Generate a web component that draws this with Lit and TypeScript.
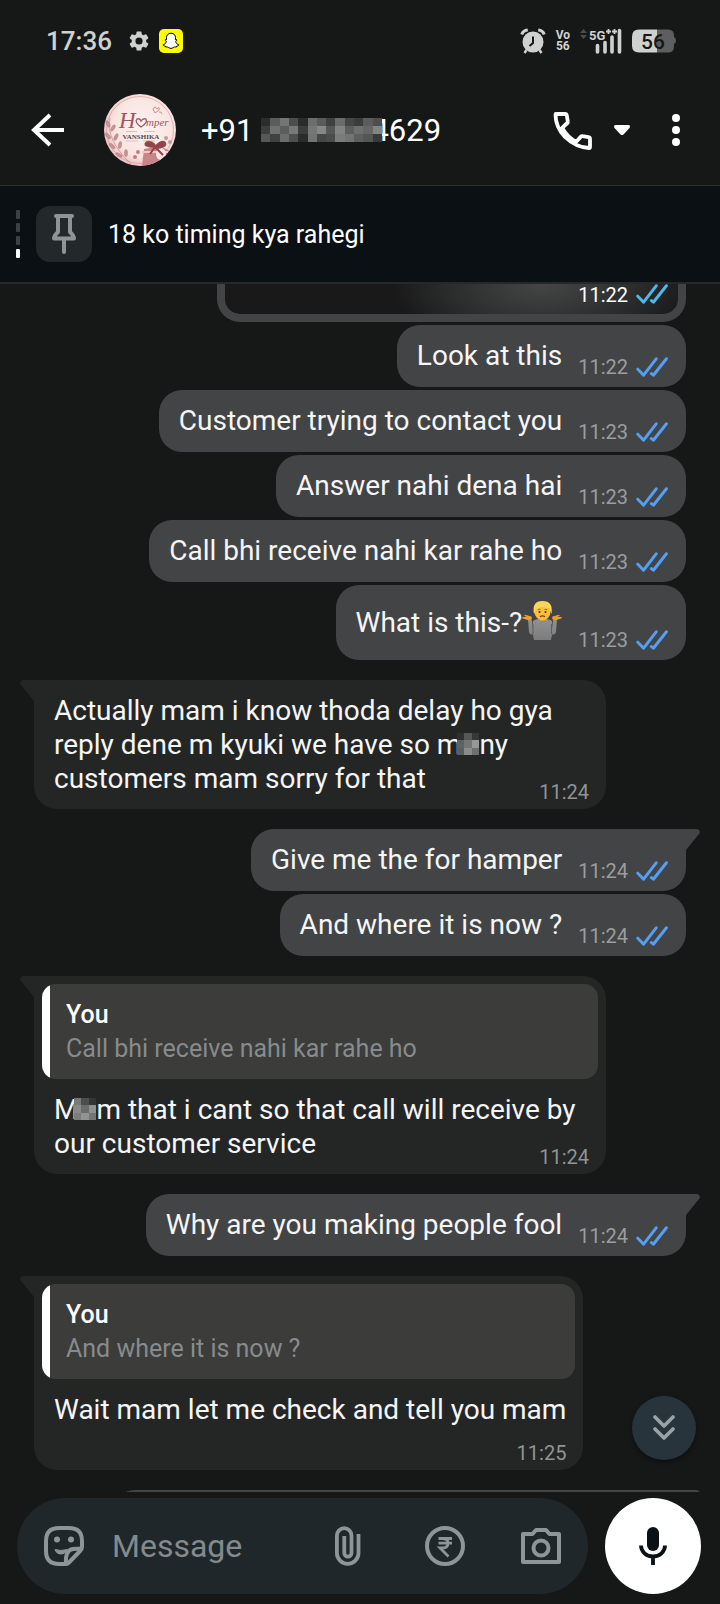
import { LitElement, html, css, svg, nothing } from "lit";
import { customElement, property } from "lit/decorators.js";
import { classMap } from "lit/directives/class-map.js";

type Part = string | { mosaic: string[] } | { emoji: true };

interface Message {
  parts: Part[];
  time: string;
  mine: boolean;
  tail?: boolean;
  stacked?: boolean;
  quote?: string;
}

const MESSAGES: Message[] = [
  { parts: ["Look at this"], time: "11:22", mine: true },
  { parts: ["Customer trying to contact you"], time: "11:23", mine: true },
  { parts: ["Answer nahi dena hai"], time: "11:23", mine: true },
  { parts: ["Call bhi receive nahi kar rahe ho"], time: "11:23", mine: true },
  { parts: ["What is this-?", { emoji: true }], time: "11:23", mine: true },
  {
    parts: [
      "Actually mam i know thoda delay ho gya reply dene m kyuki we have so m",
      { mosaic: ["#2f3030", "#555656", "#363737", "#606161", "#747575", "#969797", "#5b5c5c", "#8a8b8b", "#6d6e6e"] },
      "ny customers mam sorry for that",
    ],
    time: "11:24",
    mine: false,
    tail: true,
  },
  { parts: ["Give me the for hamper"], time: "11:24", mine: true, tail: true },
  { parts: ["And where it is now ?"], time: "11:24", mine: true },
  {
    parts: [
      "M",
      { mosaic: ["#787979", "#4c4d4d", "#333434", "#888989", "#6b6c6c", "#8f9090", "#7b7c7c", "#919292", "#747575"] },
      "m that i cant so that call will receive by our customer service",
    ],
    time: "11:24",
    mine: false,
    tail: true,
    quote: "Call bhi receive nahi kar rahe ho",
  },
  { parts: ["Why are you making people fool"], time: "11:24", mine: true, tail: true },
  {
    parts: ["Wait mam let me check and tell you mam"],
    time: "11:25",
    mine: false,
    tail: true,
    stacked: true,
    quote: "And where it is now ?",
  },
];

const ticks = html`<svg class="ticks" width="32" height="20" viewBox="0 0 32 20" role="img" aria-label="Read">
  <g fill="none" stroke="currentColor" stroke-width="3" stroke-linecap="round" stroke-linejoin="round">
    <path d="M1.8 12.2 7.6 18.2 20.2 1.8" />
    <path d="M15.4 16.6 17.4 18.2 30.4 1.8" />
  </g>
</svg>`;

const shrug = html`<svg class="emoji" width="40" height="39" viewBox="0 0 40 39" role="img" aria-label="Person shrugging">
  <defs>
    <linearGradient id="shirt" x1="0" x2="0" y1="0" y2="1">
      <stop offset="0" stop-color="#929292" /><stop offset="1" stop-color="#7c7c7c" />
    </linearGradient>
  </defs>
  <path d="M11 20q3-2.500 9.500-2.500T30 20l.5 8 .5-9 4-1-1 13q-.5 3-4 2.500l-1 5.500H12l-1-5.500q-3.500.5-4-2.500L6 18l4 1 .5 9z" fill="url(#shirt)" />
  <path d="M11 33V23M29.500 33V23" stroke="#5e5e5e" stroke-width="1" />
  <path d="M5.500 19 .8 17.500q-1.200-1 .2-1.500l3.500-.2L2 14.200q.5-1 2-.2l5.500 1.500.5 2.500q-2 1.500-4.500 1zM34.500 19l4.700-1.500q1.200-1-.2-1.500l-3.500-.2 2.500-1.600q-.5-1-2-.2l-5.500 1.500-.5 2.500q2 1.500 4.500 1z" fill="#e9a02c" />
  <path d="M17 16h7v3q-3.500 2-7 0z" fill="#d98c1f" />
  <ellipse cx="20.500" cy="10.500" rx="8" ry="9" fill="#fbbf3a" />
  <path d="M12 13Q9.500 0 20.500 0T29.500 13q-1.500-3-2-6-5 .5-7-1.500Q16 7 14 8q-.5 3-2 5z" fill="#fcd65c" />
  <path d="M16 8.800q1.200-.9 2.400-.3M22.600 8.500q1.200-.6 2.400.3" stroke="#8a5a12" stroke-width=".9" fill="none" />
  <circle cx="17.500" cy="11" r="1.100" fill="#513a16" /><circle cx="23.500" cy="11" r="1.100" fill="#513a16" />
  <path d="M18 15.800q2.500-2 5 0" stroke="#7a3f10" stroke-width="1.200" fill="none" />
</svg>`;

const mosaic = (cells: string[]) => html`<svg class="mosaic" width="22" height="22" viewBox="0 0 3 3" preserveAspectRatio="none" shape-rendering="crispEdges" role="img" aria-label="Redacted">
  ${cells.map((c, i) => svg`<rect x=${i % 3} y=${Math.floor(i / 3)} width="1" height="1" fill=${c} />`)}
</svg>`;

@customElement("chat-message")
export class ChatMessage extends LitElement {
  @property({ attribute: false }) message!: Message;

  static styles = css`
    :host {
      display: flex;
      max-width: min(88%, 572px);
      align-self: flex-start;
    }
    :host([mine]) {
      align-self: flex-end;
    }
    .bubble {
      position: relative;
      box-sizing: border-box;
      border-radius: 23px;
      background: #242626;
      color: #f4f5f5;
      font-size: 28px;
      line-height: 34px;
    }
    .mine {
      background: #434446;
    }
    .tail {
      border-top-left-radius: 0;
    }
    .mine.tail {
      border-top-left-radius: 23px;
      border-top-right-radius: 0;
    }
    .point {
      position: absolute;
      top: 0;
      right: 100%;
      color: #242626;
    }
    .mine .point {
      right: auto;
      left: 100%;
      color: #434446;
      transform: scaleX(-1);
    }
    .quote {
      margin: 8px 8px 0;
      padding: 14px 24px 13px;
      border-radius: 14px;
      background: linear-gradient(to right, #fff 8px, #3c3c3a 8px);
      color: #868b8d;
      font-size: 25px;
    }
    .who {
      display: block;
      color: #fff;
      font-weight: 500;
    }
    .said {
      display: block;
    }
    .body {
      display: grid;
      padding: 14px 17px 6px 20px;
    }
    .mine .body {
      grid-template-columns: auto auto;
      column-gap: 16px;
      padding: 14px 18px 9px 20px;
    }
    .text {
      grid-area: 1 / 1;
      padding-bottom: 7px;
    }
    .mine .text {
      padding-bottom: 5px;
    }
    .meta {
      grid-area: 1 / 1;
      place-self: end;
      display: flex;
      align-items: center;
      gap: 8px;
      color: #919394;
      font-size: 20px;
      line-height: 22px;
    }
    .mine .meta {
      grid-area: 1 / 2;
      color: #9c9d9e;
    }
    .stacked .meta {
      grid-area: 2 / 1;
      padding-top: 8px;
    }
    .ticks {
      color: #559ff2;
    }
    .emoji {
      margin: 2px 0 6px;
      vertical-align: -14px;
    }
    .mosaic {
      position: relative;
      margin-left: -4px;
      vertical-align: -1px;
    }
  `;

  render() {
    const m = this.message;
    return html`<article class=${classMap({ bubble: true, mine: m.mine, tail: !!m.tail, stacked: !!m.stacked })}>
      ${m.tail
        ? html`<svg class="point" width="14" height="21" viewBox="0 0 14 21" aria-hidden="true">
            <path d="M14 0H3Q-1 1 .6 4.500L14 21z" fill="currentColor" />
          </svg>`
        : nothing}
      ${m.quote ? html`<div class="quote"><span class="who">You</span><span class="said">${m.quote}</span></div>` : nothing}
      <div class="body">
        <div class="text">${m.parts.map((p) => (typeof p === "string" ? p : "emoji" in p ? shrug : mosaic(p.mosaic)))}</div>
        <div class="meta"><time>${m.time}</time>${m.mine ? ticks : nothing}</div>
      </div>
    </article>`;
  }
}

@customElement("status-bar")
export class StatusBar extends LitElement {
  static styles = css`
    :host {
      display: flex;
      align-items: center;
      height: 82px;
      padding: 0 44px 0 46px;
      color: #cfd1d0;
      font-size: 26px;
      font-weight: 500;
    }
    .left,
    .right {
      display: flex;
      align-items: center;
    }
    .left {
      flex: 1;
      gap: 10px;
    }
    .clock {
      margin-right: 7px;
    }
    .right {
      gap: 10px;
    }
    .volte {
      display: grid;
      font-size: 12px;
      font-weight: 700;
      line-height: 11px;
      text-align: center;
    }
    svg {
      display: block;
    }
  `;

  render() {
    return html`
      <div class="left">
        <time class="clock">17:36</time>
        <svg width="20" height="20" viewBox="2 2 20 20" aria-hidden="true">
          <path fill="currentColor" d="M19.140 12.940c.04-.3.060-.61.060-.94 0-.32-.02-.64-.07-.94l2.030-1.580a.49.49 0 0 0 .12-.61l-1.920-3.320a.49.49 0 0 0-.59-.22l-2.390.96a7 7 0 0 0-1.620-.94l-.36-2.540a.48.48 0 0 0-.48-.41h-3.840a.48.48 0 0 0-.47.41l-.36 2.540c-.59.24-1.130.57-1.620.94l-2.390-.96a.48.48 0 0 0-.59.22L2.740 8.870a.48.48 0 0 0 .12.61l2.030 1.580c-.05.3-.09.63-.09.94s.02.64.07.94l-2.030 1.580a.49.49 0 0 0-.12.61l1.920 3.320c.12.22.37.29.59.22l2.390-.96c.5.38 1.030.7 1.620.94l.36 2.540c.05.24.24.41.48.41h3.840c.24 0 .44-.17.47-.41l.36-2.540a7 7 0 0 0 1.620-.94l2.390.96c.22.08.47 0 .59-.22l1.920-3.320a.48.48 0 0 0-.12-.61zM12 15.600a3.600 3.600 0 1 1 0-7.200 3.600 3.600 0 0 1 0 7.200z" />
        </svg>
        <svg width="24" height="24" viewBox="0 0 24 24" aria-hidden="true">
          <rect width="24" height="24" rx="5" fill="#fffc00" />
          <path d="M12 4.200c3 0 4.500 2.100 4.500 4.500v2q1.400-.5 1.500.3c0 .7-1.200.9-1.300 1.600.4 1.800 1.700 2.800 3.100 3.200.2.900-1 1.100-2.100 1.300l-.4 1c-1.300-.3-2.200-.2-3.200.6-1.300.9-2.900.9-4.200 0-1-.8-1.900-.9-3.200-.6l-.4-1c-1.100-.2-2.300-.4-2.100-1.300 1.400-.4 2.700-1.400 3.100-3.200C7.200 11.900 6 11.700 6 11q.1-.8 1.500-.3v-2c0-2.400 1.500-4.500 4.500-4.500z" fill="#fff" stroke="#000" stroke-width="1" />
        </svg>
      </div>
      <div class="right">
        <svg width="26" height="26" viewBox="0 0 26 26" aria-hidden="true">
          <circle cx="13" cy="14" r="10.500" fill="currentColor" />
          <path d="M1.800 6.500Q3 2.500 7.800 2M24.200 6.500Q23 2.500 18.200 2" stroke="currentColor" stroke-width="3" fill="none" />
          <path d="M6.500 22 4.500 25M19.500 22l2 3" stroke="currentColor" stroke-width="2.500" />
          <path d="M13 8.500V15l-3.500 3" stroke="#161817" stroke-width="2" fill="none" />
        </svg>
        <div class="volte"><span>Vo</span><span>56</span></div>
        <svg width="42" height="26" viewBox="0 0 42 26" role="img" aria-label="Signal">
          <path d="M0 5 3.500 1 7 5zM0 7h7l-3.500 4z" fill="#4b4d4c" />
          <text x="9" y="11.500" font-size="13" font-weight="700" fill="currentColor">5G</text>
          <path d="M26 3.500h5M28.500 1v5M32 3.500h5M34.500 1v5" stroke="currentColor" stroke-width="1.800" />
          <path d="M17.500 17.500v6.500M25 14.500V24M32 9V24M39.500 2.500V24" stroke="currentColor" stroke-width="3.600" stroke-linecap="round" />
        </svg>
        <svg width="44" height="24" viewBox="0 0 44 24" role="img" aria-label="Battery">
          <path d="M25 .5h11q6 0 6 6V8q2 .5 2 3.500T42 15v2.500q0 6-6 6H25z" fill="#5d5f5e" />
          <path d="M25 .5H7q-7 0-7 7v9q0 7 7 7h18z" fill="currentColor" />
          <text x="21" y="19.500" text-anchor="middle" font-size="21" font-weight="500" fill="#161817">56</text>
        </svg>
      </div>
    `;
  }
}

const REDACTED_DIGITS = [
  "#2b2d2c", "#5a5c5b", "#747675", "#4c4e4d", "#2a2c2b", "#6c6e6d", "#595b5a", "#3f4140", "#6a6c6b", "#454746", "#3b3d3c", "#5b5d5c", "#4d4f4e",
  "#3c3e3d", "#6f7170", "#5c5e5d", "#777978", "#3b3d3c", "#757776", "#868887", "#555756", "#818382", "#5c5e5d", "#6e706f", "#656766", "#838584",
  "#565857", "#404241", "#6b6d6c", "#4e504f", "#2a2c2b", "#727473", "#454746", "#4a4c4b", "#7a7c7b", "#727473", "#5d5f5e", "#545655", "#383a39",
];

@customElement("app-root")
export class AppRoot extends LitElement {
  static styles = css`
    :host {
      display: flex;
      flex-direction: column;
      height: 100vh;
      background: #161817;
      color: #fff;
      font-family: Roboto, "Liberation Sans", sans-serif;
    }
    button {
      display: flex;
      align-items: center;
      justify-content: center;
      padding: 0;
      border: 0;
      background: none;
      color: inherit;
      font: inherit;
    }
    svg {
      display: block;
    }
    .header {
      display: flex;
      align-items: center;
      height: 96px;
      padding: 0 40px 7px 30px;
      border-bottom: 1px solid #2b2d2e;
    }
    .avatar {
      margin: 0 25px 0 38px;
    }
    .name {
      flex: 1;
      display: flex;
      align-items: center;
      margin: 0;
      font-size: 31px;
      font-weight: 400;
    }
    .hidden-digits {
      position: relative;
      margin: 0 -11px 0 8px;
    }
    .caret {
      margin: 0 42px 0 22px;
    }
    .pinned {
      display: flex;
      align-items: center;
      height: 96px;
      padding: 0 16px;
      gap: 16px;
      border-bottom: 2px solid #24292b;
      background: #0a1014;
      font-size: 25px;
    }
    .pages {
      display: grid;
      gap: 4px;
    }
    .page {
      width: 4px;
      height: 9px;
      border-radius: 1px;
      background: #3a4147;
    }
    .page.current {
      background: #fff;
    }
    .pin {
      display: grid;
      place-items: center;
      width: 56px;
      height: 56px;
      border-radius: 14px;
      background: #23282b;
      color: #8d9598;
    }
    .conversation {
      position: relative;
      flex: 1;
      min-height: 0;
    }
    .messages {
      box-sizing: border-box;
      height: 100%;
      display: flex;
      flex-direction: column;
      gap: 3px;
      overflow: hidden;
      padding: 0 34px;
    }
    .messages > * {
      flex-shrink: 0;
    }
    .turn {
      margin-top: 17px;
    }
    .photo {
      align-self: flex-end;
      box-sizing: border-box;
      display: flex;
      justify-content: flex-end;
      gap: 8px;
      width: 72%;
      height: 38px;
      padding-right: 10px;
      border: solid #434446;
      border-width: 0 8px 8px;
      border-radius: 0 0 23px 23px;
      background: radial-gradient(ellipse 150px 70px at 70% 0, #454545, #2c2e2d 60%, transparent 100%), #191919;
      font-size: 20px;
      line-height: 22px;
    }
    .ticks {
      color: #4fb6e6;
    }
    .next {
      align-self: flex-end;
      position: relative;
      width: 88%;
      height: 62px;
      border-radius: 23px 0 0 23px;
      background: #434446;
    }
    .next .point {
      position: absolute;
      top: 0;
      left: 100%;
    }
    .jump {
      position: absolute;
      right: 24px;
      bottom: 32px;
      width: 64px;
      height: 64px;
      border-radius: 50%;
      background: #27343b;
      color: #98a2a7;
      box-shadow: 0 2px 4px #0006;
    }
    .composer {
      display: flex;
      align-items: center;
      gap: 17px;
      padding: 6px 19px 10px 17px;
    }
    .field {
      flex: 1;
      min-width: 0;
      display: flex;
      align-items: center;
      height: 96px;
      box-sizing: border-box;
      padding: 0 27px;
      border-radius: 48px;
      background: #1f272a;
      color: #8d9598;
    }
    .input {
      flex: 1;
      min-width: 0;
      padding: 0 0 0 28px;
      border: 0;
      outline: 0;
      background: none;
      color: #fff;
      font: inherit;
      font-size: 32px;
    }
    .input::placeholder {
      color: #838b8f;
      opacity: 1;
    }
    .tools {
      display: flex;
      align-items: center;
      gap: 56px;
    }
    .tools .attach {
      margin-right: 8px;
    }
    .mic {
      width: 96px;
      height: 96px;
      border-radius: 50%;
      background: #fff;
      color: #0a1014;
    }
  `;

  render() {
    return html`
      <status-bar></status-bar>
      <header class="header">
        <button aria-label="Back">
          <svg width="36" height="36" viewBox="0 0 36 36"><path d="M20 3 4 18l16 15M4 18h30" fill="none" stroke="currentColor" stroke-width="4" /></svg>
        </button>
        <svg class="avatar" width="72" height="72" viewBox="0 0 72 72" role="img" aria-label="Hamper by Vanshika">
          <defs>
            <clipPath id="round"><circle cx="36" cy="36" r="36" /></clipPath>
            <radialGradient id="paper" cx=".55" cy=".45" r=".6">
              <stop offset="0" stop-color="#fdf3f0" /><stop offset=".7" stop-color="#f9e4e1" /><stop offset="1" stop-color="#e9b9b8" />
            </radialGradient>
          </defs>
          <g clip-path="url(#round)">
            <rect width="72" height="72" fill="url(#paper)" />
            <circle cx="36" cy="36" r="33.500" fill="none" stroke="#d99c9b" stroke-width=".7" />
            <g stroke="#b9807f" fill="#c99496" stroke-width=".6">
              <path d="M6 24Q1 45 27 70" fill="none" />
              <ellipse cx="4" cy="30" rx="1.500" ry="3.500" transform="rotate(-25 4 30)" />
              <ellipse cx="9" cy="34" rx="1.500" ry="3.500" transform="rotate(30 9 34)" />
              <ellipse cx="4" cy="42" rx="1.500" ry="3.500" transform="rotate(-40 4 42)" />
              <ellipse cx="12" cy="43" rx="1.500" ry="3.500" transform="rotate(25 12 43)" />
              <ellipse cx="8" cy="52" rx="1.500" ry="3.500" transform="rotate(-50 8 52)" />
              <ellipse cx="16" cy="51" rx="1.500" ry="3.500" transform="rotate(10 16 51)" />
              <ellipse cx="15" cy="61" rx="1.500" ry="3.500" transform="rotate(-60 15 61)" />
              <ellipse cx="22" cy="59" rx="1.500" ry="3.500" transform="rotate(0 22 59)" />
            </g>
            <path d="M38 72l2-17 16-3 12 6-3 14z" fill="#c98688" />
            <path d="M38 58h26" stroke="#efc9c7" stroke-width="2" />
            <ellipse cx="57" cy="60" rx="5" ry="6" fill="#f9e8e5" />
            <path d="M51 51q-6-5-9-2t9 4q8-8 10-4t-9 5l7 7M51 53l-5 7" fill="#93444b" stroke="#93444b" stroke-width="2" />
            <circle cx="62" cy="44" r="2" fill="#c9989a" /><circle cx="66" cy="48" r="2" fill="#c9989a" />
            <circle cx="34" cy="58" r="2" fill="#c08083" /><circle cx="31" cy="63" r="2" fill="#c08083" />
            <path d="M49 15q2-4 4 0q3-3 2 1l-4 3zM55 18q2-1 3 2" fill="none" stroke="#b8777b" stroke-width=".8" />
            <text x="15" y="34" font-family="Liberation Serif, serif" font-style="italic" font-size="23" fill="#a2565e">H</text>
            <path d="M37 33q-7-5-4-8 3-1 4 2 2-3 5-2 2 4-5 8z" fill="none" stroke="#a2565e" stroke-width="1.300" />
            <text x="42" y="32" font-family="Liberation Serif, serif" font-style="italic" font-size="11" fill="#a2565e">mper</text>
            <path d="M22 37.500h11M40 37.500h11M22 47h12M39 47h12" stroke="#b98d8d" stroke-width=".5" />
            <text x="37" y="45" text-anchor="middle" font-family="Liberation Serif, serif" font-size="7" font-weight="700" fill="#5e4346">VANSHIKA</text>
          </g>
        </svg>
        <h1 class="name">
          <span>+91</span>
          <svg class="hidden-digits" width="121" height="24" viewBox="0 0 13 3" preserveAspectRatio="none" shape-rendering="crispEdges" role="img" aria-label="Redacted digits">
            ${REDACTED_DIGITS.map((c, i) => svg`<rect x=${i % 13} y=${Math.floor(i / 13)} width="1" height="1" fill=${c} />`)}
          </svg>
          <span>4629</span>
        </h1>
        <button aria-label="Call">
          <svg width="40" height="40" viewBox="0 0 40 40">
            <path d="M3.500 4.500Q3.500 4 4 4h9q1.500 0 1.800 1.500l1 6q.2 1-.6 1.800l-5 4.500q5 9 14 14l4.500-5q.8-.8 1.800-.6l6 1q1.500.3 1.500 1.800v8q0 1-1 1Q24 37.500 13 27 3.500 17 3.500 4.500zM10.200 17.800 15 13M24 31.800 28.700 27" fill="none" stroke="currentColor" stroke-width="3.800" stroke-linejoin="round" />
          </svg>
        </button>
        <button class="caret" aria-label="Call options">
          <svg width="16" height="11" viewBox="0 0 16 11"><path d="M2 0h12q3 0 1.500 3L9.500 9.500q-1.500 1-3 0L.5 3Q-1 0 2 0z" fill="currentColor" /></svg>
        </button>
        <button aria-label="More options">
          <svg width="8" height="32" viewBox="0 0 8 32" fill="currentColor"><circle cx="4" cy="4" r="4" /><circle cx="4" cy="16" r="4" /><circle cx="4" cy="28" r="4" /></svg>
        </button>
      </header>
      <section class="pinned" aria-label="Pinned message">
        <div class="pages"><i class="page"></i><i class="page"></i><i class="page"></i><i class="page current"></i></div>
        <div class="pin">
          <svg width="24" height="40" viewBox="0 0 24 40" fill="none" stroke="currentColor" stroke-width="4" stroke-linecap="round" stroke-linejoin="round">
            <path d="M4 2h16M6 2v16q-4 4-4 6.500h20Q22 22 18 18V2M12 25v13" />
          </svg>
        </div>
        <span>18 ko timing kya rahegi</span>
      </section>
      <main class="conversation">
        <div class="messages">
          <div class="photo"><time>11:22</time>${ticks}</div>
          ${MESSAGES.map((m, i) => html`<chat-message class=${i > 0 && MESSAGES[i - 1].mine !== m.mine ? "turn" : ""} ?mine=${m.mine} .message=${m}></chat-message>`)}
          <div class="next turn">
            <svg class="point" width="14" height="21" viewBox="0 0 14 21" aria-hidden="true"><path d="M0 0h11q4 1 2.400 4.500L0 21z" fill="#434446" /></svg>
          </div>
        </div>
        <button class="jump" aria-label="Scroll to latest">
          <svg width="24" height="26" viewBox="0 0 24 26" fill="none" stroke="currentColor" stroke-width="3.600" stroke-linecap="round" stroke-linejoin="round"><path d="m3 2 9 9 9-9M3 14l9 9 9-9" /></svg>
        </button>
      </main>
      <footer class="composer">
        <div class="field">
          <button aria-label="Stickers">
            <svg width="40" height="40" viewBox="0 0 40 40" fill="none" stroke="currentColor" stroke-width="4">
              <path d="M22 38H15Q2 38 2 25V15Q2 2 15 2h10q13 0 13 13v6q0 2-2 4L25 36.500q-1.500 1.500-3 1.500z" />
              <path d="M22 38q-1-14 7-15 3-.4 9-.4" />
              <path d="M11 23.500q6 2 12 0-2 5-6 4.500-4.500 0-6-4.500z" fill="currentColor" stroke-width="1" />
              <circle cx="13" cy="13.500" r="3" fill="currentColor" stroke="none" /><circle cx="27" cy="13.500" r="3" fill="currentColor" stroke="none" />
            </svg>
          </button>
          <input class="input" type="text" placeholder="Message" aria-label="Message" />
          <div class="tools">
            <button class="attach" aria-label="Attach">
              <svg width="26" height="40" viewBox="0 0 26 40" fill="none" stroke="currentColor" stroke-width="3.800"><path d="M23.500 8v19a10.800 10.800 0 0 1-21.600 0V9.500a7.300 7.300 0 0 1 14.600 0V27a3.600 3.600 0 0 1-7.200 0V10" /></svg>
            </button>
            <button aria-label="Pay">
              <svg width="40" height="40" viewBox="0 0 40 40" fill="none" stroke="currentColor">
                <circle cx="20" cy="20" r="18" stroke-width="4" />
                <path d="M13.500 12.500H27M13.500 17.200H27M14 12.500h3.500q5.500 0 5.500 4.700T17.500 22H15l8.500 8.500" stroke-width="2.800" />
              </svg>
            </button>
            <button aria-label="Camera">
              <svg width="40" height="36" viewBox="0 0 40 36" fill="none" stroke="currentColor" stroke-width="4" stroke-linejoin="round">
                <path d="M2 6h9.500l3.500-4h10l3.500 4H38v28H2z" /><circle cx="20" cy="20" r="7.500" />
              </svg>
            </button>
          </div>
        </div>
        <button class="mic" aria-label="Voice message">
          <svg width="28" height="38" viewBox="0 0 28 38"><rect x="8" y="0" width="12" height="24" rx="6" fill="currentColor" /><path d="M2 18.500a12 11 0 0 0 24 0M14 30v8" fill="none" stroke="currentColor" stroke-width="3.800" /></svg>
        </button>
      </footer>
    `;
  }
}
